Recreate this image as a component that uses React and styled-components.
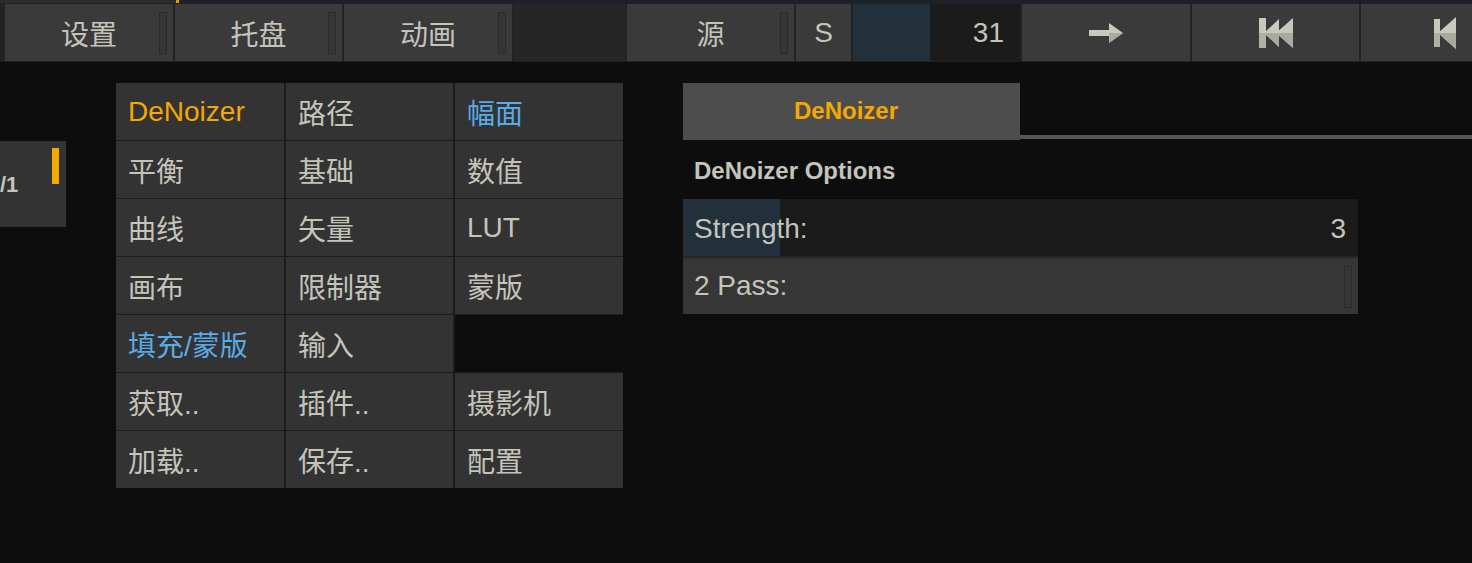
import React from 'react';
import styled, { createGlobalStyle } from 'styled-components';

const textGrey = '#c4c4bb';
const orange = '#f5a800';
const blue = '#5aaae6';

const GlobalStyle = createGlobalStyle`
  html, body {
    margin: 0;
    padding: 0;
    background: #0d0d0d;
    overflow: hidden;
  }
  body {
    font-family: "Liberation Sans", "Noto Sans CJK SC", sans-serif;
    color: ${textGrey};
  }
`;

const Page = styled.div`
  width: 1472px;
  height: 563px;
  overflow: hidden;
  background: #0d0d0d;
`;

const TopStrip = styled.div`
  height: 3px;
  background: linear-gradient(
    to right,
    #2b2b2b 0,
    #2b2b2b 176px,
    #e0a000 176px,
    #e0a000 179px,
    #1b2129 179px
  );
`;

const TopBar = styled.div`
  display: flex;
  gap: 2px;
  height: 59px;
  box-sizing: border-box;
  padding: 1px 0 1px 5px;
  background: #222;
  overflow: hidden;
`;

const BarButton = styled.div`
  position: relative;
  flex: 0 0 ${(p) => p.$w || 168}px;
  display: flex;
  align-items: center;
  justify-content: center;
  background: ${(p) => (p.$blank ? '#262626' : '#3a3a3a')};
  font-size: 28px;
  color: ${textGrey};
`;

const Slot = styled.span`
  position: absolute;
  right: 6px;
  top: 8px;
  width: 6px;
  height: 40px;
  border: 1px solid #2a2a2a;
  background: #363636;
`;

const Slider = styled.div`
  position: relative;
  display: flex;
  align-items: center;
  justify-content: ${(p) => (p.$label ? 'space-between' : 'flex-end')};
  background: #1b1b1b;
  font-size: 28px;
  color: ${textGrey};
  padding: 0 ${(p) => p.$padRight || 12}px 0 11px;
  box-sizing: border-box;
  &::before {
    content: '';
    position: absolute;
    left: 0;
    top: 0;
    bottom: 0;
    width: ${(p) => p.$fill}px;
    background: #22303c;
  }
  span {
    position: relative;
  }
`;

const BarSlider = styled(Slider)`
  flex: 0 0 167px;
`;

const Main = styled.div`
  display: flex;
  align-items: flex-start;
`;

const SidePanel = styled.div`
  margin-top: 79px;
  width: 66px;
  height: 86px;
  display: flex;
  justify-content: space-between;
  align-items: flex-start;
  padding: 7px 7px 0 0;
  box-sizing: border-box;
  background: #333;
`;

const SideLabel = styled.span`
  align-self: center;
  margin-top: -6px;
  font-size: 22px;
  font-weight: bold;
  color: ${textGrey};
`;

const SideMark = styled.span`
  width: 7px;
  height: 36px;
  background: ${orange};
`;

const MenuGrid = styled.div`
  margin: 21px 0 0 50px;
  display: grid;
  grid-template-columns: 168px 167px 168px;
  grid-auto-rows: 56.5px;
  gap: 1.5px 2px;
  background: #1c1c1c;
`;

const Cell = styled.div`
  display: flex;
  align-items: center;
  padding: 2px 0 0 12px;
  background: ${(p) => (p.$empty ? '#0d0d0d' : '#333')};
  font-size: 28px;
  color: ${(p) => (p.$tone === 'orange' ? orange : p.$tone === 'blue' ? blue : textGrey)};
`;

const Panel = styled.div`
  flex: 1;
  margin: 21px 0 0 60px;
  display: flex;
  flex-direction: column;
`;

const TabRow = styled.div`
  display: flex;
  align-items: flex-end;
  height: 57px;
`;

const Tab = styled.div`
  flex: 0 0 337px;
  height: 57px;
  display: flex;
  align-items: center;
  justify-content: center;
  padding: 0 11px 2px 0;
  box-sizing: border-box;
  background: #4d4d4d;
  font-size: 24px;
  font-weight: bold;
  color: ${orange};
`;

const TabLine = styled.div`
  flex: 1;
  height: 4px;
  margin-bottom: 1px;
  background: #555;
`;

const Heading = styled.div`
  height: 59px;
  display: flex;
  align-items: center;
  padding: 2px 0 0 11px;
  box-sizing: border-box;
  font-size: 24px;
  font-weight: bold;
  color: ${textGrey};
`;

const Options = styled.div`
  width: 675px;
  display: flex;
  flex-direction: column;
  gap: 2px;
  background: #262626;
`;

const OptionSlider = styled(Slider)`
  height: 57px;
  padding-top: 2px;
`;

const Toggle = styled.div`
  position: relative;
  height: 56px;
  display: flex;
  align-items: center;
  padding-left: 11px;
  background: #363636;
  font-size: 28px;
  color: ${textGrey};
`;

const ArrowIcon = () => (
  <svg width="34" height="20" viewBox="0 0 34 20">
    <rect x="0" y="7" width="22" height="6" fill="#c8c8be" />
    <polygon points="20,0 34,10 20,20" fill="#c8c8be" />
    <polygon points="20,10 34,10 20,20" fill="#a9a99f" />
  </svg>
);

const FirstFrameIcon = () => (
  <svg width="34" height="30" viewBox="0 0 34 30">
    <rect x="0" y="0" width="7" height="30" fill="#c8c8be" />
    <rect x="0" y="15" width="7" height="15" fill="#b0b0a6" />
    <polygon points="5,15 20,1 20,29" fill="#c8c8be" />
    <polygon points="5,15 20,15 20,29" fill="#a9a99f" />
    <polygon points="17,15 34,0 34,30" fill="#c8c8be" />
    <polygon points="17,15 34,15 34,30" fill="#a9a99f" />
  </svg>
);

const PrevFrameIcon = () => (
  <svg width="22" height="32" viewBox="0 0 22 32">
    <rect x="0" y="2" width="6" height="28" fill="#c8c8be" />
    <rect x="0" y="16" width="6" height="14" fill="#b0b0a6" />
    <polygon points="4,16 22,0 22,32" fill="#c8c8be" />
    <polygon points="4,16 22,16 22,32" fill="#a9a99f" />
  </svg>
);

const menu = [
  [{ t: 'DeNoizer', tone: 'orange' }, { t: '路径' }, { t: '幅面', tone: 'blue' }],
  [{ t: '平衡' }, { t: '基础' }, { t: '数值' }],
  [{ t: '曲线' }, { t: '矢量' }, { t: 'LUT' }],
  [{ t: '画布' }, { t: '限制器' }, { t: '蒙版' }],
  [{ t: '填充/蒙版', tone: 'blue' }, { t: '输入' }, { t: '', empty: true }],
  [{ t: '获取..' }, { t: '插件..' }, { t: '摄影机' }],
  [{ t: '加载..' }, { t: '保存..' }, { t: '配置' }],
];

export default function App() {
  return (
    <Page>
      <GlobalStyle />
      <TopStrip />
      <TopBar>
        <BarButton>设置<Slot /></BarButton>
        <BarButton $w={167}>托盘<Slot /></BarButton>
        <BarButton>动画<Slot /></BarButton>
        <BarButton $w={111} $blank />
        <BarButton $w={167}>源<Slot /></BarButton>
        <BarButton $w={55}>S</BarButton>
        <BarSlider $fill={77} $padRight={16}>
          <span>31</span>
        </BarSlider>
        <BarButton><ArrowIcon /></BarButton>
        <BarButton $w={167}><FirstFrameIcon /></BarButton>
        <BarButton><PrevFrameIcon /></BarButton>
      </TopBar>
      <Main>
        <SidePanel>
          <SideLabel>/1</SideLabel>
          <SideMark />
        </SidePanel>
        <MenuGrid>
          {menu.flat().map((c, i) => (
            <Cell key={i} $tone={c.tone} $empty={c.empty}>
              {c.t}
            </Cell>
          ))}
        </MenuGrid>
        <Panel>
          <TabRow>
            <Tab>DeNoizer</Tab>
            <TabLine />
          </TabRow>
          <Heading>DeNoizer Options</Heading>
          <Options>
            <OptionSlider $fill={97} $label>
              <span>Strength:</span>
              <span>3</span>
            </OptionSlider>
            <Toggle>
              2 Pass:
              <Slot />
            </Toggle>
          </Options>
        </Panel>
      </Main>
    </Page>
  );
}
